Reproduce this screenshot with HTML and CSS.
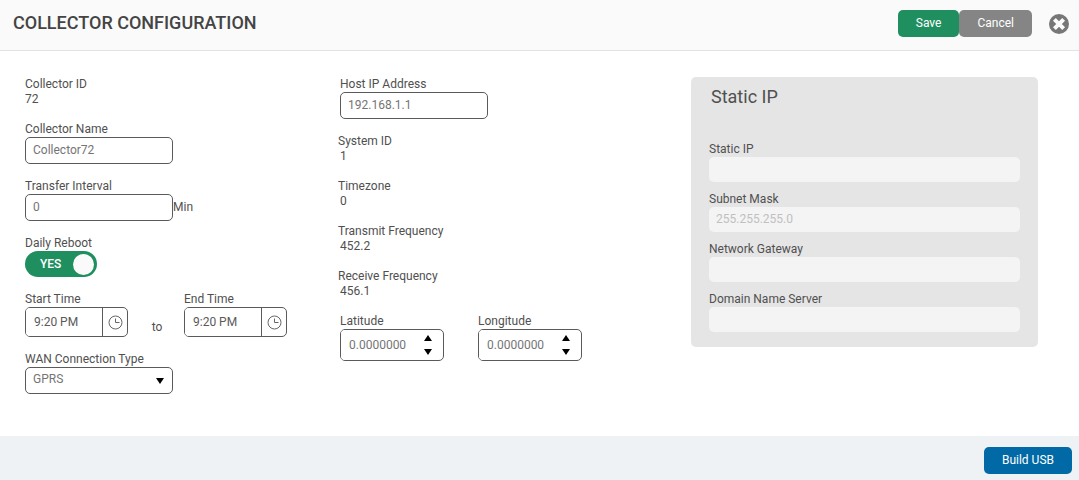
FILE: index.html
```html
<!DOCTYPE html>
<html lang="en">
<head>
    <meta charset="UTF-8">
    <meta name="viewport" content="width=device-width, initial-scale=1.0">
    <title>Collector Configuration</title>
    <link rel="stylesheet" href="styles.css">
</head>
<body>
    <form class="page">
        <header class="topbar">
            <h1>COLLECTOR CONFIGURATION</h1>
            <button type="submit" class="btn btn-save">Save</button>
            <button type="button" class="btn btn-cancel">Cancel</button>
            <button type="button" class="close" aria-label="Close">
                <svg width="20" height="20" viewBox="0 0 20 20">
                    <circle cx="10" cy="10" r="10" fill="#777"/>
                    <path d="M6.8 6.8l6.4 6.4M13.2 6.8l-6.4 6.4" stroke="#fafafa" stroke-width="4" stroke-linecap="square" stroke-linejoin="round"/>
                </svg>
            </button>
        </header>

        <main class="content">
            <!-- Collector settings -->
            <section class="column">
                <dl class="field">
                    <dt>Collector ID</dt>
                    <dd>72</dd>
                </dl>
                <div class="field">
                    <label for="collectorName">Collector Name</label>
                    <input type="text" class="box" id="collectorName" value="Collector72">
                </div>
                <div class="field">
                    <label for="transferInterval">Transfer Interval</label>
                    <div class="inline">
                        <input type="text" class="box" id="transferInterval" value="0">
                        <span>Min</span>
                    </div>
                </div>
                <div class="field">
                    <label for="dailyReboot">Daily Reboot</label>
                    <div class="switch">
                        <input type="checkbox" id="dailyReboot" checked>
                        <span class="switch-text">YES</span>
                        <span class="switch-knob"></span>
                    </div>
                </div>
                <div class="times">
                    <div class="field">
                        <label for="startTime">Start Time</label>
                        <div class="group timepicker">
                            <input type="text" id="startTime" value="9:20 PM">
                            <button type="button" aria-label="Pick start time">
                                <svg width="15" height="15" viewBox="0 0 15 15" fill="none" stroke="#666">
                                    <circle cx="7.5" cy="7.5" r="6.5"/>
                                    <path d="M7.5 3.5v4h4"/>
                                </svg>
                            </button>
                        </div>
                    </div>
                    <span class="to">to</span>
                    <div class="field">
                        <label for="endTime">End Time</label>
                        <div class="group timepicker">
                            <input type="text" id="endTime" value="9:20 PM">
                            <button type="button" aria-label="Pick end time">
                                <svg width="15" height="15" viewBox="0 0 15 15" fill="none" stroke="#666">
                                    <circle cx="7.5" cy="7.5" r="6.5"/>
                                    <path d="M7.5 3.5v4h4"/>
                                </svg>
                            </button>
                        </div>
                    </div>
                </div>
                <div class="field">
                    <label for="wanType">WAN Connection Type</label>
                    <div class="select">
                        <select class="box" id="wanType">
                            <option>GPRS</option>
                        </select>
                        <svg class="select-arrow" width="8" height="6" viewBox="0 0 8 6"><path d="M0 0h8L4 6z"/></svg>
                    </div>
                </div>
            </section>

            <!-- Host and radio -->
            <section class="column">
                <div class="field">
                    <label for="hostIp">Host IP Address</label>
                    <input type="text" class="box" id="hostIp" value="192.168.1.1">
                </div>
                <dl class="field readout">
                    <dt>System ID</dt>
                    <dd>1</dd>
                </dl>
                <dl class="field readout">
                    <dt>Timezone</dt>
                    <dd>0</dd>
                </dl>
                <dl class="field readout">
                    <dt>Transmit Frequency</dt>
                    <dd>452.2</dd>
                </dl>
                <dl class="field readout">
                    <dt>Receive Frequency</dt>
                    <dd>456.1</dd>
                </dl>
                <div class="coords">
                    <div class="field">
                        <label for="latitude">Latitude</label>
                        <div class="group spinner">
                            <input type="text" id="latitude" value="0.0000000">
                            <div class="spinner-buttons">
                                <button type="button" aria-label="Increase latitude"><svg width="8" height="6" viewBox="0 0 8 6"><path d="M0 6h8L4 0z"/></svg></button>
                                <button type="button" aria-label="Decrease latitude"><svg width="8" height="6" viewBox="0 0 8 6"><path d="M0 0h8L4 6z"/></svg></button>
                            </div>
                        </div>
                    </div>
                    <div class="field">
                        <label for="longitude">Longitude</label>
                        <div class="group spinner">
                            <input type="text" id="longitude" value="0.0000000">
                            <div class="spinner-buttons">
                                <button type="button" aria-label="Increase longitude"><svg width="8" height="6" viewBox="0 0 8 6"><path d="M0 6h8L4 0z"/></svg></button>
                                <button type="button" aria-label="Decrease longitude"><svg width="8" height="6" viewBox="0 0 8 6"><path d="M0 0h8L4 6z"/></svg></button>
                            </div>
                        </div>
                    </div>
                </div>
            </section>

            <section class="panel">
                <h2>Static IP</h2>
                <div class="field">
                    <label for="staticIp">Static IP</label>
                    <input type="text" id="staticIp" disabled>
                </div>
                <div class="field">
                    <label for="subnetMask">Subnet Mask</label>
                    <input type="text" id="subnetMask" value="255.255.255.0" disabled>
                </div>
                <div class="field">
                    <label for="gateway">Network Gateway</label>
                    <input type="text" id="gateway" disabled>
                </div>
                <div class="field">
                    <label for="dns">Domain Name Server</label>
                    <input type="text" id="dns" disabled>
                </div>
            </section>
        </main>

        <footer class="bottombar">
            <button type="button" class="btn btn-usb">Build USB</button>
        </footer>
    </form>
</body>
</html>
```
FILE: styles.css
```css
* {
    box-sizing: border-box;
}
body {
    margin: 0;
    background-color: #fff;
    color: #505050;
    font-family: Roboto, Arial, sans-serif;
    font-size: 12px;
    line-height: 15px;
}
input, select, button {
    font-family: inherit;
    font-size: inherit;
    line-height: inherit;
    margin: 0;
}
svg {
    display: block;
}
.page {
    display: flex;
    flex-direction: column;
    min-height: 100vh;
}

/* top bar */
.topbar {
    display: flex;
    align-items: center;
    padding: 10px 10px 13px 13px;
    background-color: #fafafa;
    border-bottom: 1px solid #e2e2e2;
}
.topbar h1 {
    flex: 1;
    margin: 0;
    padding-bottom: 2px;
    color: #444;
    font-size: 18px;
    line-height: 24px;
    font-weight: 500;
}
.btn {
    height: 27px;
    padding: 0 18px;
    border: none;
    border-radius: 5px;
    color: #fff;
    cursor: pointer;
}
.btn-save {
    background-color: #1f8f5f;
}
.btn-cancel {
    background-color: #858585;
}
.btn-usb {
    background-color: #0069a6;
}
.close {
    margin-left: 17px;
    padding: 0;
    border: none;
    background: none;
    cursor: pointer;
}

/* form */
.content {
    flex: 1;
    display: grid;
    grid-template-columns: 313fr 353fr 347fr;
    align-items: start;
    padding: 26px 41px 42px 25px;
}
.column {
    display: flex;
    flex-direction: column;
    gap: 15px;
}
.column:nth-child(2) {
    padding-left: 2px;
}
.field {
    margin: 0;
}
.field label {
    display: block;
}
.field dd {
    margin: 0;
}
.readout {
    margin-left: -2px;
}
.readout dd {
    padding-left: 2px;
}
.box {
    display: block;
    width: 148px;
    height: 27px;
    padding: 0 7px 2px;
    border: 1px solid #5a5a5a;
    border-radius: 5px;
    background-color: #fff;
    color: #757575;
}
.inline {
    display: flex;
    align-items: center;
}
.group {
    display: flex;
    border: 1px solid #5a5a5a;
    border-radius: 5px;
    overflow: hidden;
}
.group input {
    flex: 1;
    min-width: 0;
    padding: 0 8px;
    border: none;
    color: #5a5a5a;
}
.group button {
    padding: 0;
    border: none;
    background: none;
    cursor: pointer;
}
.times {
    display: flex;
}
.to {
    width: 56px;
    padding: 28px 0 0 2px;
    text-align: center;
}
.timepicker {
    width: 103px;
    height: 30px;
}
.timepicker button {
    display: flex;
    align-items: center;
    justify-content: center;
    width: 25px;
    border-left: 1px solid #5a5a5a;
}
.coords {
    display: flex;
    gap: 34px;
}
.spinner {
    width: 104px;
    height: 32px;
}
.spinner input {
    color: #757575;
}
.spinner-buttons {
    display: flex;
    flex-direction: column;
    justify-content: center;
    gap: 8px;
    padding-right: 11px;
}
.select {
    position: relative;
    width: 148px;
}
.select select {
    appearance: none;
}
.select-arrow {
    position: absolute;
    top: 11px;
    right: 9px;
    pointer-events: none;
}

/* toggle */
.switch {
    position: relative;
    display: flex;
    align-items: center;
    justify-content: space-between;
    width: 72px;
    height: 26px;
    padding: 0 3px 0 15px;
    border-radius: 13px;
    background-color: #1f8f5f;
    color: #fff;
    font-weight: 500;
}
.switch input {
    position: absolute;
    inset: 0;
    width: 100%;
    height: 100%;
    opacity: 0;
    cursor: pointer;
}
.switch-knob {
    width: 21px;
    height: 21px;
    border-radius: 50%;
    background-color: #fafafa;
}

/* static ip */
.panel {
    display: flex;
    flex-direction: column;
    gap: 10px;
    padding: 10px 18px 15px;
    border-radius: 5px;
    background-color: #e5e5e5;
}
.panel h2 {
    margin: 0 0 25px;
    padding-left: 2px;
    font-size: 18px;
    line-height: 20px;
    font-weight: 400;
}
.panel input {
    display: block;
    width: 100%;
    height: 25px;
    padding: 0 7px 2px;
    border: none;
    border-radius: 5px;
    background-color: #f4f4f4;
    color: #c0c0c0;
}

.bottombar {
    display: flex;
    justify-content: flex-end;
    padding: 11px 7px 6px;
    background-color: #eef2f4;
}
```
